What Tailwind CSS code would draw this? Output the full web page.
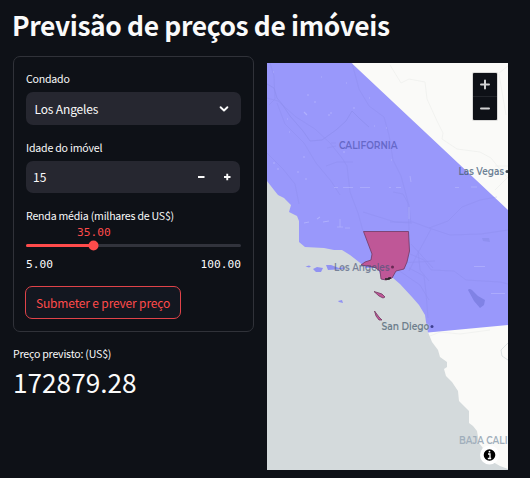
<!DOCTYPE html>
<html lang="pt">
<head>
<meta charset="utf-8">
<title>Previsão de preços de imóveis</title>
<script src="https://cdn.jsdelivr.net/npm/@tailwindcss/browser@4"></script>
</head>
<body class="w-[530px] h-[478px] overflow-hidden bg-[#0e1117] text-[#fafafa] font-['Noto_Sans_CJK_JP',sans-serif]">
<h1 class="h-[56px] pl-[12px] pt-[5px] text-[26.4px] leading-[40px] tracking-[-0.37px] font-bold whitespace-nowrap">Previsão de preços de imóveis</h1>
<main class="flex pl-[13px] gap-[13px]">
  <section class="w-[241px] shrink-0">
    <form class="h-[276px] rounded-[7px] border border-[#303239] px-[12px] pt-[14px]">
      <div class="text-[10.6px] leading-[16px] h-[21px] tracking-[-0.21px] whitespace-nowrap">Condado</div>
      <div class="h-[33px] w-[215px] rounded-[7px] bg-[#262730] flex items-center justify-between pl-[8.5px] pr-[12px] text-[12px] tracking-[-0.15px]">
        <span>Los Angeles</span>
        <svg class="w-[10px] h-[8px]" viewBox="0 0 10 8" fill="none" stroke="#fafafa" stroke-width="1.9" stroke-linecap="round" stroke-linejoin="round"><path d="M1.6 2.2 5 5.5 8.4 2.2"/></svg>
      </div>
      <div class="mt-[15px] text-[10.6px] leading-[16px] h-[21px] tracking-[-0.2px] whitespace-nowrap">Idade do imóvel</div>
      <div class="h-[32px] w-[214px] rounded-[7px] bg-[#262730] flex items-center pl-[7px] text-[12px]">
        <span class="grow">15</span>
        <svg class="w-[34px] h-[10px] mr-[8px]" viewBox="0 0 34 10" fill="none" stroke="#fafafa" stroke-width="1.9"><path d="M0 5H6.500M26 5H32.500M29.250 1.750V8.250"/></svg>
      </div>
      <div class="mt-[15px] text-[10.6px] leading-[16px] h-[16px] tracking-[-0.22px] whitespace-nowrap">Renda média (milhares de US$)</div>
      <div class="pl-[51px] h-[16px] leading-[17px] text-[11.200px] text-[#ff4b4b] font-['DejaVu_Sans_Mono',monospace]">35.00</div>
      <svg class="block w-[215px] h-[12px]" viewBox="0 0 215 12"><rect y="4" width="215" height="3" rx="1.500" fill="#31333c"/><rect y="4" width="68" height="3" rx="1.500" fill="#ff4b4b"/><circle cx="67.500" cy="5.500" r="5" fill="#ff4b4b"/></svg>
      <div class="mt-[5px] h-[15px] leading-[16px] w-[215px] flex justify-between text-[11.200px] font-['DejaVu_Sans_Mono',monospace]"><span>5.00</span><span>100.00</span></div>
      <button type="button" class="mt-[14px] -ml-px w-[156px] h-[33px] flex items-center justify-center rounded-[7px] border border-[#e04349] bg-[#131720] text-[#ff4b4b] text-[12px] tracking-[-0.16px] whitespace-nowrap">Submeter e prever preço</button>
    </form>
    <div class="mt-[14px] text-[10.6px] leading-[16px] tracking-[-0.21px] whitespace-nowrap">Preço previsto: (US$)</div>
    <div class="text-[26.200px] leading-[40px]">172879.28</div>
  </section>
  <svg class="mt-[7px] w-[241px] h-[407px] shrink-0 block" viewBox="267 63 241 407" font-family="Montserrat, Inter, sans-serif">
    <rect x="267" y="63" width="241" height="407" fill="#d4dadc"/>
    <path d="M350 63H508V212Z" fill="#fafaf8"/>
    <path d="M428 332 432 342 438 350 440 357 447 362 447 367 444 369 446 376 452 382 458 391 459 401 465 407 469 411 469 423 473 426 477 431 479 443 486 452 493 462 500 466 508 469V324Z" fill="#fafaf8"/>
    <g fill="none" stroke="#eff0ee" stroke-width=".8">
      <path d="M390 65 401 83 409 79 425 82 427 99 437 121 443 133 442 139 457 149 480 152 491 158 499 168 508 178M508 66 499 73M495 166H508M495 190 508 177M499 74 506 115M430 336 440 332 460 334 490 330"/>
      <path d="M508 343 501 350 502 356 508 360" stroke="#d4dadc"/>
    </g>
    <path d="M267 63H351.500L508 210V325L428 332.500L426 322L425 315L419 305L412 297L400 284L393 278L387 279L382 280L378 268L366 268L359 262L350 255L342 250L334 250L324 248L305 247L299 242L299 221L297 216L289 212L291 205L284 198L278 195L274 190L267 181Z" fill="#9998fb"/>
    <path d="M305.500 266.500 309 265.500 311 266.500 309 267.500ZM313 269 317 267 323 268 321 272 316 272ZM326 265 331 265 339 268 344 267 344 269 328 270ZM338 301 342 300 343 303 339 302Z" fill="#9192f2"/>
    <path d="M468 290Q469 288 472 290L478 296 485 300 484 305 480 308 474 301Z" fill="#8082e5"/>
    <path d="M482 238 489 238 490 242 483 241Z" fill="#8f90f0"/>
    <g fill="none" stroke="#8485e3" stroke-width=".7" opacity=".5">
      <path d="M267 84 274 88 277 98 282 104 290 116 303 131 310 141 322 140 336 130 346 121 352 111 360 119 369 127"/>
      <path d="M270 63 274 76 275 99 269 105M267 98 278 101 296 117 315 129 330 143 342 158 347 166 350 192 358 213 363 231M277 103 285 124 304 143 316 163 331 181 340 195M267 153 283 169 295 184 299 204M326 166 337 162 353 162M352 63 359 89 369 106 384 117 389 135 393 160 401 176 408 202 409 230M363 212 395 222 410 223M390 222 413 222 429 228 450 235 481 234 508 230M429 228 448 221 462 207 480 200 497 197M393 192 403 194 409 205 411 224M431 229 418 253 409 271M410 254 424 260 431 270 454 271 466 280 500 282 508 284M409 268 424 276 426 293 428 318M418 250 420 270 429 281M400 263 435 261M398 270 420 285 429 300M411 244 433 268M331 143H336M327 148 336 146" opacity=".6"/>
    </g>
    <g fill="none" stroke="#bbbcff" stroke-width=".8" opacity=".65">
      <path d="M340 219V227M337 227H343M345 228H350M334 187.500H338M343 187.500H353M360 187.500H370M389 187.500H391M396 187.500H401M409 207V219M474 266.500H485M491 293.500H505M471 187H477M455 187.500H459M410 176 411 182"/>
      <path d="M273 72h1M307 95h2M321 77h1M304 112 307 115M314 102h2M330 113h2M328 115h2M353 108h2M374 126h1M289 132h1M303 157h2M273 163h2M277 169h2M297 172h2M305 179h2M343 152h2M391 160h1M317 219 320 217M304 223 309 222M323 222 329 221M287 119h1M346 83h1M369 98h1M386 128h1" stroke-width="1.200"/>
    </g>
    <path d="M363.500 231.500H408.500L409.500 251L407 262L404 269L396 271L392 278L386 280L381 279L380 271L374 267L361 265L365 262L371 260L372 254Z" fill="#bf5797" stroke="#723861" stroke-width=".8"/>
    <path d="M374 291.500 379 293 382 294 385 297 383 298 379 296ZM374.500 311 379 317 382 320 379 320 376 316Z" fill="#bf5797" stroke="#723861" stroke-width=".8"/>
    <path d="M385 279H389V278H391" fill="none" stroke="#222" stroke-width="1.500"/>
    <circle cx="392.500" cy="267" r="1.500" fill="#682954"/>
    <circle cx="432" cy="326.500" r="1.500" fill="#3e3f91"/>
    <circle cx="507" cy="171.500" r="1.500" fill="#40474d"/>
    <g font-size="10.600" font-weight="600">
      <text x="339" y="148.500" textLength="58.500" lengthAdjust="spacingAndGlyphs" fill="#6668c8">CALIFORNIA</text>
      <text x="458.500" y="175" textLength="45.500" lengthAdjust="spacingAndGlyphs" fill="#485f78" fill-opacity=".8">Las Vegas</text>
      <text x="381.500" y="330" textLength="48" lengthAdjust="spacingAndGlyphs" fill="#6e7f8d" stroke="#d4dadc" stroke-opacity=".4" stroke-width="1.200" paint-order="stroke">San Diego</text>
      <text x="334" y="271" textLength="55.500" lengthAdjust="spacingAndGlyphs" fill="#485578" fill-opacity=".68">Los Angeles</text>
      <text x="459" y="444" textLength="48.500" lengthAdjust="spacingAndGlyphs" fill="#a0aebb">BAJA CALI</text>
    </g>
    <rect x="472" y="72" width="26" height="49" rx="2" fill="#000" opacity=".13"/>
    <rect x="473" y="73" width="24" height="47" rx="1" fill="#0e1117"/>
    <path d="M473 96.500H497" stroke="#282b31" stroke-width=".8"/>
    <path d="M481 84.500H489M485 80.500V88.500M481 108.500H489" stroke="#d1d2d3" stroke-width="2" stroke-linecap="round"/>
    <circle cx="489.500" cy="455" r="9.500" fill="#fff"/>
    <circle cx="489.500" cy="455" r="5.800" fill="#000"/>
    <path d="M488 454H490V458.500M487.800 458.500H491.200" fill="none" stroke="#fff" stroke-width="1.300"/><circle cx="489.500" cy="451.700" r=".9" fill="#fff"/>
  </svg>
</main>
</body>
</html>
